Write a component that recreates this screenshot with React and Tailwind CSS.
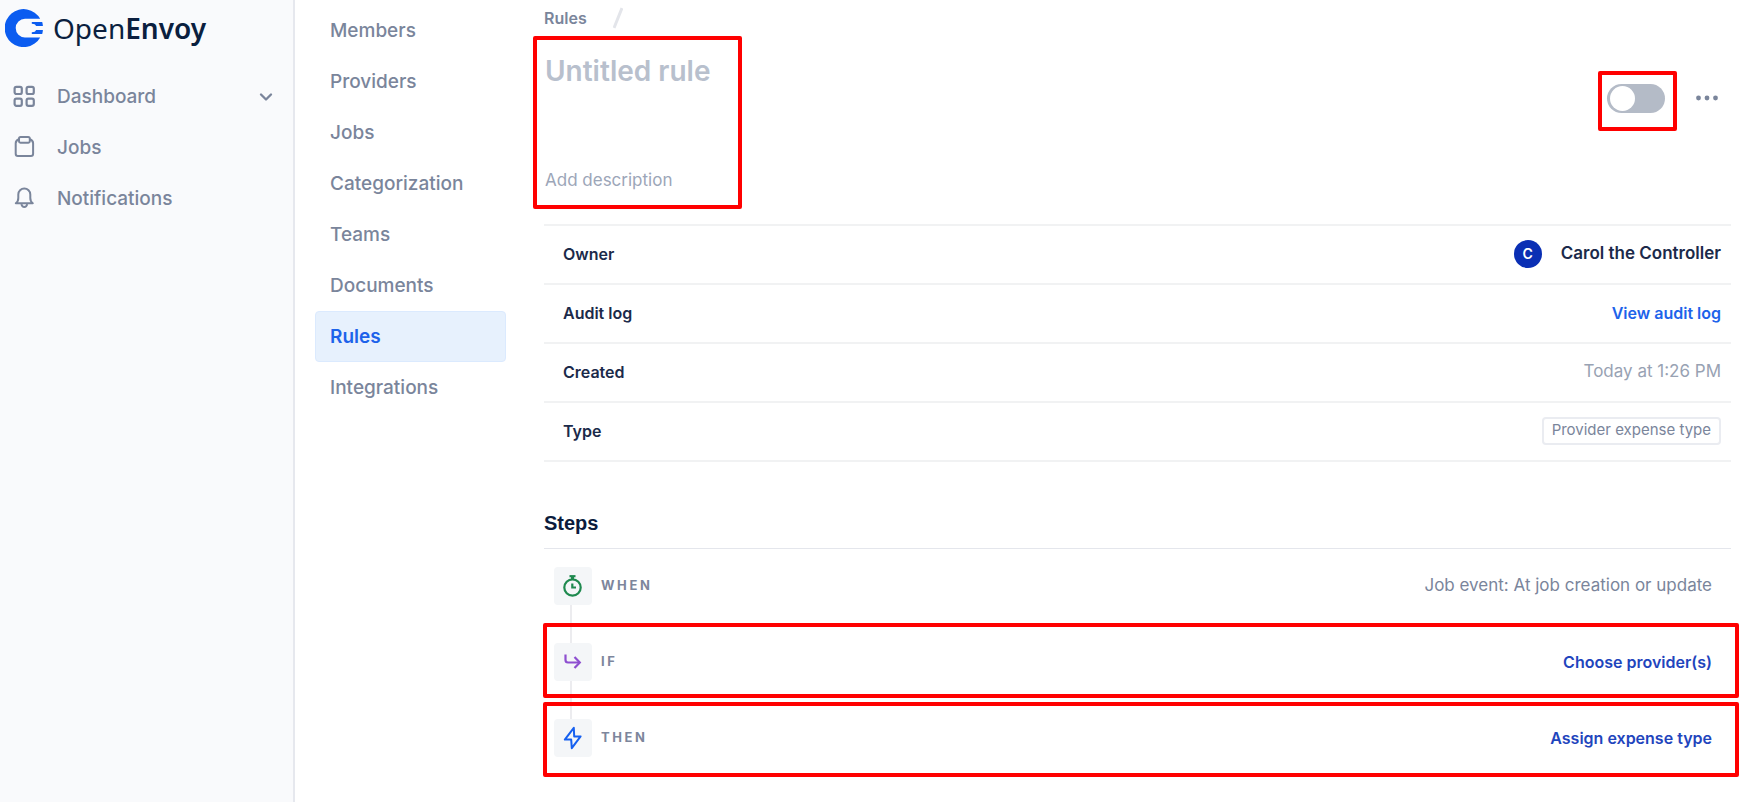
import React, { useState } from 'react';
import { ChevronDown } from 'lucide-react';

const GridIcon = () => (
  <svg viewBox="0 0 24 24" className="w-6 h-6" fill="none" stroke="currentColor" strokeWidth="2.2">
    <rect x="2.6" y="1.8" width="7.2" height="7.2" rx="1.8" />
    <rect x="14.6" y="1.8" width="7.2" height="7.2" rx="1.8" />
    <rect x="2.6" y="13.6" width="7.2" height="7.2" rx="1.8" />
    <rect x="14.6" y="13.6" width="7.2" height="7.2" rx="1.8" />
  </svg>
);

const ClipboardIcon = () => (
  <svg viewBox="0 0 24 24" className="w-6 h-6" fill="none" stroke="currentColor" strokeWidth="2">
    <path d="M7 3.3C4.6 4.1 3.7 5.1 3.7 7.3v10.400a2.2 2.2 0 0 0 2.2 2.2h13a2.2 2.2 0 0 0 2.2-2.2V7.300c0-2.200-.9-3.200-3.300-4" />
    <path d="M8.600 1h7.600a1.600 1.600 0 0 1 1.600 1.600v2.700a1.400 1.400 0 0 1-1.400 1.400H8.400A1.400 1.400 0 0 1 7 5.300V2.600a1.600 1.600 0 0 1 1.600-1.600z" />
  </svg>
);

const BellIcon = () => (
  <svg viewBox="0 0 24 24" className="w-6 h-6" fill="none" stroke="currentColor" strokeWidth="2" strokeLinejoin="round">
    <path d="M3.800 16.300c1.900-1.200 2.500-2.600 2.500-5.200V7.500a6 6 0 0 1 12 0v3.600c0 2.600.6 4 2.500 5.200z" />
    <path d="M9.400 17.100c.4 2 1.500 2.800 2.900 2.800s2.500-.8 2.900-2.800" />
  </svg>
);

const StopwatchIcon = () => (
  <svg viewBox="0 0 24 24" className="w-6 h-6 text-[#1f8a4f]" fill="none" stroke="currentColor" strokeWidth="2.2">
    <circle cx="11.5" cy="13.5" r="8.2" />
    <path d="M8.500 2.200h6" />
    <path d="M11.500 2.200v3" strokeWidth="3" />
    <path d="M11.300 9.600v3.900h3.700" />
  </svg>
);

const BranchIcon = () => (
  <svg viewBox="0 0 24 24" className="w-6 h-6 text-[#8e4fd0]" fill="none" stroke="currentColor" strokeWidth="2.2">
    <path d="M4.500 4.500V10A2.500 2.500 0 0 0 7 12.500H18.500" />
    <path d="M13.500 7l5.300 5.500-5.300 5.500" />
  </svg>
);

const BoltIcon = () => (
  <svg viewBox="0 0 24 24" className="w-6 h-6 text-[#1660f0]" fill="none" stroke="currentColor" strokeWidth="2" strokeLinejoin="round">
    <path d="M12.800 1.800L3.800 13.600H10.200L10.800 22.200L19.600 10.400H13.200z" />
  </svg>
);

const Logo = () => (
  <a href="#home" className="flex items-center gap-[10px] h-[56px] pl-[5px] text-[#0b1f3f]">
    <svg viewBox="0 0 38 38" className="w-[38px] h-[38px]" fill="#0b5cf0">
      <path d="M35.2 9.8A19 19 0 1 0 35.2 28.4H20a9.3 9.3 0 0 1 0-18.6z" />
      <path d="M26.8 13H37.200q.6 2 .7 4H31q-.6-2.200-4.200-2.300z" />
      <path d="M26.800 25H37.200q.6-2 .7-4H31q-.6 2.200-4.200 2.300z" />
    </svg>
    <span className="font-['Noto_Sans'] text-[28px] leading-none">
      Open<span className="font-semibold">Envoy</span>
    </span>
  </a>
);

const mainNav = [
  { label: 'Dashboard', icon: GridIcon, expandable: true },
  { label: 'Jobs', icon: ClipboardIcon },
  { label: 'Notifications', icon: BellIcon },
];

const settingsNav = ['Members', 'Providers', 'Jobs', 'Categorization', 'Teams', 'Documents', 'Rules', 'Integrations'];

const Highlight = ({ className }) => (
  <div className={`absolute pointer-events-none border-4 border-[#ff0000] rounded-xs ${className}`} />
);

const DetailRow = ({ label, children }) => (
  <div className="flex items-center justify-between h-[59px] pb-[2px] pl-[19px] pr-[10px] border-b-2 border-[#f1f2f3]">
    <dt className="font-semibold text-base text-[#1b2a4a]">{label}</dt>
    <dd className="flex items-center text-[17px]">{children}</dd>
  </div>
);

const Step = ({ icon: Icon, label, last, highlight, children }) => (
  <li className="relative flex items-center justify-between h-[76px] pb-[2px] pl-[10px] pr-[19px] text-[17px]">
    <div className="flex items-center gap-[9px]">
      <div className="relative">
        <div className="flex items-center justify-center w-[38px] h-[38px] rounded-sm bg-[#f4f6f8]">
          <Icon />
        </div>
        {!last && <div className="absolute top-full left-[16px] w-[2px] h-[38px] bg-[#ececef]" />}
      </div>
      <span className="text-[13px] font-bold tracking-[0.2em] text-[#7d869c]">{label}</span>
    </div>
    {children}
    {highlight && <Highlight className={highlight} />}
  </li>
);

const App = () => {
  const [title, setTitle] = useState('');
  const [description, setDescription] = useState('');
  const [enabled, setEnabled] = useState(false);

  return (
    <div className="flex min-h-screen bg-white font-['Inter',sans-serif] text-base text-[#7a859b]">
      <aside className="w-[295px] shrink-0 bg-[#f9fafc] border-r-2 border-[#e6e8ee]">
        <Logo />
        <nav className="pt-[15px]">
          {mainNav.map(({ label, icon: Icon, expandable }) => (
            <a key={label} href="#" className="flex items-center h-[51px] pl-3 pr-[17px] text-[19px] font-medium">
              <Icon />
              <span className="flex-1 pt-[2px] pl-[21px]">{label}</span>
              {expandable && <ChevronDown className="w-5 h-5" strokeWidth={2.8} />}
            </a>
          ))}
        </nav>
      </aside>

      <nav className="w-[191px] shrink-0 ml-5 pt-[5px]">
        {settingsNav.map((item) => (
          <a
            key={item}
            href="#"
            className={
              item === 'Rules'
                ? 'flex items-center h-[51px] px-[14px] pt-[2px] text-[19px] font-semibold rounded-sm border border-[#dbeafe] bg-[#e7f1fd] text-[#1d63ea]'
                : 'flex items-center h-[51px] px-[15px] pt-[2px] text-[19px] font-medium'
            }
          >
            {item}
          </a>
        ))}
      </nav>

      <main className="flex-1 min-w-0 ml-[38px] mr-[30px]">
        <div className="flex items-center gap-[26px] h-9">
          <a href="#" className="font-semibold">Rules</a>
          <svg viewBox="0 0 10 22" className="w-[10px] h-[22px]" stroke="#e3e5ea" strokeWidth="3">
            <path d="M1 21L9 1" />
          </svg>
        </div>

        <header className="flex justify-between h-[188px]">
          <div className="relative flex flex-col justify-between w-[198px] h-[173px] pt-[15px] pb-[16px] pl-px">
            <input
              aria-label="Rule name"
              placeholder="Untitled rule"
              value={title}
              onChange={(e) => setTitle(e.target.value)}
              className="w-full h-10 text-[28px] font-semibold text-[#1b2a4a] placeholder-[#b8c0cd] outline-none"
            />
            <input
              aria-label="Description"
              placeholder="Add description"
              value={description}
              onChange={(e) => setDescription(e.target.value)}
              className="w-full h-6 text-[17px] text-[#1b2a4a] placeholder-[#9ca6b8] outline-none"
            />
            <Highlight className="-left-[11px] right-0 inset-y-0" />
          </div>
          <div className="flex items-center gap-[26px] h-[124px] pr-3">
            <label className="relative flex">
              <input
                type="checkbox"
                role="switch"
                aria-label="Enable rule"
                checked={enabled}
                onChange={(e) => setEnabled(e.target.checked)}
                className="appearance-none w-[58px] h-[29px] rounded-full bg-[#b4bbc7] checked:bg-[#1d63ea] before:block before:w-[25px] before:h-[25px] before:mt-[2px] before:ml-[3px] before:rounded-full before:bg-white checked:before:ml-[30px]"
              />
              <Highlight className="-left-[9px] -right-[12px] -top-[13px] -bottom-[18px]" />
            </label>
            <button aria-label="More actions" className="flex items-center h-6">
              <svg viewBox="0 0 28 6" className="w-7 h-[6px]" fill="currentColor">
                <circle cx="7.5" cy="3" r="2.4" />
                <circle cx="16" cy="3" r="2.4" />
                <circle cx="24.5" cy="3" r="2.4" />
              </svg>
            </button>
          </div>
        </header>

        <dl className="border-t-2 border-[#f1f2f3]">
          <DetailRow label="Owner">
            <span className="flex items-center justify-center w-7 h-7 mr-[19px] rounded-full bg-[#0a2fb4] text-sm font-semibold text-white">C</span>
            <span className="font-semibold text-[#1b2a4a]">Carol the Controller</span>
          </DetailRow>
          <DetailRow label="Audit log">
            <a href="#" className="text-base font-semibold text-[#1d63ea]">View audit log</a>
          </DetailRow>
          <DetailRow label="Created">
            <span className="text-[#98a2b3]">Today at 1:26 PM</span>
          </DetailRow>
          <DetailRow label="Type">
            <span className="flex items-center h-7 px-[8px] text-[15px] border-2 border-[#eaecf1] rounded-sm">
              Provider expense type
            </span>
          </DetailRow>
        </dl>

        <section>
          <h2 className="flex items-end h-[87px] pb-[11px] font-['Liberation_Sans',sans-serif] text-xl font-bold text-[#0b1c3d] border-b border-[#e4e6ec]">Steps</h2>
          <ol>
            <Step icon={StopwatchIcon} label="WHEN">
              <span>Job event: At job creation or update</span>
            </Step>
            <Step icon={BranchIcon} label="IF" highlight="-left-px -right-2 -top-[2px] bottom-[3px]">
              <button className="text-base font-semibold text-[#1f45bd]">Choose provider(s)</button>
            </Step>
            <Step icon={BoltIcon} label="THEN" last highlight="-left-px -right-2 top-px bottom-0">
              <button className="text-base font-semibold text-[#1f45bd]">Assign expense type</button>
            </Step>
          </ol>
        </section>
      </main>
    </div>
  );
};

export default App;
